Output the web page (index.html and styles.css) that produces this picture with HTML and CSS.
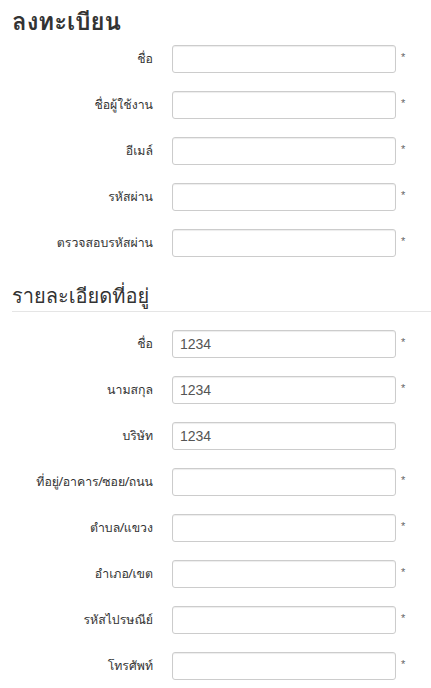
FILE: index.html
```html
<!DOCTYPE html>
<html lang="th">
<head>
  <meta charset="UTF-8">
  <meta name="viewport" content="width=device-width, initial-scale=1.0">
  <title>ลงทะเบียน</title>
  <link rel="stylesheet" href="styles.css">
</head>
<body>

  <form class="register">
    <h2 class="page-title">ลงทะเบียน</h2>

    <div class="field">
      <label>ชื่อ</label>
      <input type="text">
      <span class="req">*</span>
    </div>
    <div class="field">
      <label>ชื่อผู้ใช้งาน</label>
      <input type="text">
      <span class="req">*</span>
    </div>
    <div class="field">
      <label>อีเมล์</label>
      <input type="email">
      <span class="req">*</span>
    </div>
    <div class="field">
      <label>รหัสผ่าน</label>
      <input type="password">
      <span class="req">*</span>
    </div>
    <div class="field">
      <label>ตรวจสอบรหัสผ่าน</label>
      <input type="password">
      <span class="req">*</span>
    </div>

    <h3 class="section-title">รายละเอียดที่อยู่</h3>

    <div class="field">
      <label>ชื่อ</label>
      <input type="text" value="1234">
      <span class="req">*</span>
    </div>
    <div class="field">
      <label>นามสกุล</label>
      <input type="text" value="1234">
      <span class="req">*</span>
    </div>
    <div class="field">
      <label>บริษัท</label>
      <input type="text" value="1234">
    </div>
    <div class="field">
      <label>ที่อยู่/อาคาร/ซอย/ถนน</label>
      <input type="text">
      <span class="req">*</span>
    </div>
    <div class="field">
      <label>ตำบล/แขวง</label>
      <input type="text">
      <span class="req">*</span>
    </div>
    <div class="field">
      <label>อำเภอ/เขต</label>
      <input type="text">
      <span class="req">*</span>
    </div>
    <div class="field">
      <label>รหัสไปรษณีย์</label>
      <input type="text">
      <span class="req">*</span>
    </div>
    <div class="field">
      <label>โทรศัพท์</label>
      <input type="text">
      <span class="req">*</span>
    </div>
  </form>

</body>
</html>
```

FILE: styles.css
```css
* { margin: 0; padding: 0; box-sizing: border-box; }
body { font-family: Tahoma, Loma, Garuda, Waree, "Noto Sans Thai Looped", "Noto Sans Thai", "Noto Sans", sans-serif; font-size: 12.3px; color: #333; background: #fff; }

.register { padding: 0 0 0 12px; }

.page-title { font-size: 24px; font-weight: bold; line-height: 28px; padding-top: 8px; margin-bottom: 9px; color: #333; }

.section-title { font-size: 20px; font-weight: normal; line-height: 26px; padding-top: 8px; padding-bottom: 2px; border-bottom: 1px solid #e5e5e5; margin-bottom: 18px; }

.field { display: flex; align-items: flex-start; height: 28px; margin-bottom: 18px; }
.field label { width: 160px; padding-right: 19px; text-align: right; line-height: 28px; font-weight: normal; }
.field input { width: 224px; height: 28px; border: 1px solid #ccc; border-radius: 3px; padding: 0 7px; font-family: Arial, "Liberation Sans", sans-serif; font-size: 14px; color: #555; box-shadow: inset 0 1px 1px rgba(0,0,0,0.075); }
.req { margin-left: 5px; padding-top: 5px; font-family: Arial, "Liberation Sans", sans-serif; font-size: 11px; line-height: 14px; color: #666; }
```
